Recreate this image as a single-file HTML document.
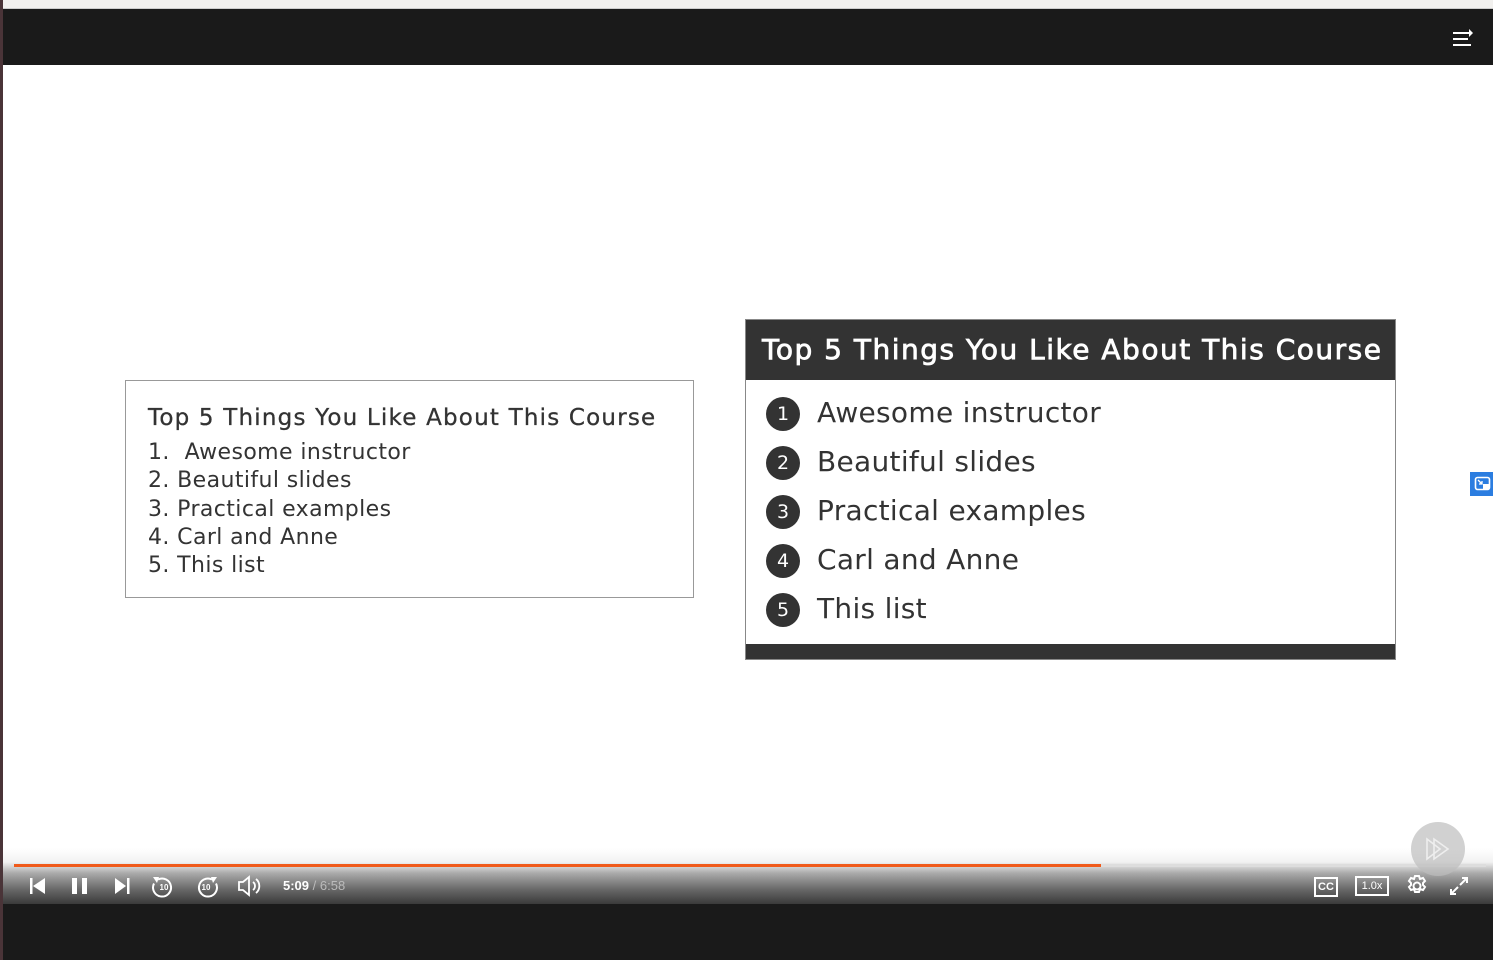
<!DOCTYPE html>
<html><head><style>
body{margin:0;width:1493px;height:960px;overflow:hidden;background:#fff;font-family:"Liberation Sans",sans-serif;position:relative}
.a{position:absolute}
.s{font-family:"DejaVu Sans",sans-serif}
.n{display:inline-block;width:34px;height:34px;border-radius:50%;background:#333;color:#fff;font-size:19px;line-height:34px;text-align:center;vertical-align:middle;margin-right:17px;letter-spacing:0}
</style></head><body>
<div class="a" style="left:0;top:0;width:1493px;height:8px;background:#f1f0ee;border-bottom:1px solid #ccc"></div>
<div class="a" style="left:3px;top:9px;width:1490px;height:56px;background:#1a1a1a"></div>
<div class="a" style="left:0;top:0;width:3px;height:960px;background:#4a3438"></div>
<svg class="a" style="left:1450px;top:28px" width="26" height="20"><g stroke="#fff" stroke-width="2"><line x1="3" y1="5" x2="20" y2="5"/><line x1="3" y1="11" x2="18" y2="11"/><line x1="3" y1="17" x2="21" y2="17"/></g><path d="M19 1l4 4-4 4z" fill="#fff"/></svg>

<div class="a s" style="left:125px;top:380px;width:567px;height:216px;border:1px solid #999;background:#fff;color:#333;font-size:22px;line-height:28.3px">
<div style="position:absolute;left:22px;top:23px;font-size:23px;letter-spacing:1.2px;white-space:nowrap;-webkit-text-stroke:0.3px #333">Top 5 Things You Like About This Course</div>
<div style="position:absolute;left:22px;top:58px;white-space:nowrap;letter-spacing:0.4px">1.&nbsp; Awesome instructor<br>2. Beautiful slides<br>3. Practical examples<br>4. Carl and Anne<br>5. This list</div>
</div>

<div class="a s" style="left:745px;top:319px;width:649px;height:339px;border:1px solid #888;background:#fff">
<div style="height:60px;background:#333;color:#fff;font-size:28px;letter-spacing:1.5px;line-height:60px;padding-left:16px;-webkit-text-stroke:0.8px #fff;white-space:nowrap">Top 5 Things You Like About This Course</div>
<div style="position:absolute;left:0;bottom:0;width:100%;height:15px;background:#333"></div>
<div style="position:absolute;left:20px;top:68px;color:#333;font-size:28px;line-height:49px;white-space:nowrap;letter-spacing:0.3px">
<div><span class="n">1</span>Awesome instructor</div>
<div><span class="n">2</span>Beautiful slides</div>
<div><span class="n">3</span>Practical examples</div>
<div><span class="n">4</span>Carl and Anne</div>
<div><span class="n">5</span>This list</div>
</div>
</div>

<div class="a" style="left:1470px;top:472px;width:23px;height:24px;background:#2b7de0"></div>
<svg class="a" style="left:1474px;top:476px" width="18" height="16"><rect x="1.5" y="1.5" width="14" height="12" rx="2" fill="none" stroke="#fff" stroke-width="1.6"/><path d="M4 4l4 4M8 5v3H5" stroke="#fff" stroke-width="1.3" fill="none"/><rect x="9" y="8" width="6" height="5" fill="#fff"/></svg>

<div class="a" style="left:3px;top:848px;width:1490px;height:56px;background:linear-gradient(#fff 0%,#f2f2f2 25%,#aaa 45%,#666 75%,#3a3a3a 100%)"></div>
<div class="a" style="left:3px;top:904px;width:1490px;height:56px;background:#1a1a1a"></div>
<div class="a" style="left:14px;top:864px;width:1472px;height:3px;background:#ddd"></div>
<div class="a" style="left:14px;top:864px;width:1087px;height:3px;background:#f05a1a"></div>
<div class="a" style="left:1411px;top:822px;width:54px;height:54px;border-radius:50%;background:rgba(190,190,190,0.7)"></div>
<svg class="a" style="left:1424px;top:835px" width="30" height="28" fill="none" stroke="#eee" stroke-width="1.6"><path d="M3 4v20l13-10z"/><path d="M10 4v20l14-10z"/></svg>

<svg class="a" style="left:25px;top:874px" width="360" height="26" fill="#fff">
<rect x="5" y="4" width="2.5" height="16"/><path d="M8 12l12-8v16z"/>
<rect x="47" y="4" width="5" height="16"/><rect x="57" y="4" width="5" height="16"/>
<path d="M90 4l11 8-11 8z"/><rect x="102" y="4" width="2.5" height="16"/>
<g fill="none" stroke="#fff" stroke-width="2"><path d="M133 5.5a9 9 0 1 1 -4 4"/><path d="M187 5.5a9 9 0 1 0 4 4"/></g>
<path d="M128 3l6 0-2 6z"/><path d="M192 3l-6 0 2 6z"/>
<text x="139" y="16" font-size="8" font-weight="bold" text-anchor="middle" font-family="Liberation Sans">10</text>
<text x="181" y="16" font-size="8" font-weight="bold" text-anchor="middle" font-family="Liberation Sans">10</text>
<path d="M214 8h4l6-5v18l-6-5h-4z" fill="none" stroke="#fff" stroke-width="1.8"/>
<path d="M228 8a5 5 0 0 1 0 8M231 5a9 9 0 0 1 0 14" fill="none" stroke="#fff" stroke-width="1.8"/>
</svg>
<div class="a" style="left:283px;top:878px;font-size:13px;color:#fff"><b>5:09</b> <span style="color:#bbb">/ 6:58</span></div>

<div class="a" style="left:1314px;top:877px;color:#fff;font-size:11px;font-weight:bold;line-height:16px;text-align:center;box-sizing:border-box;width:24px;height:20px;border:2px solid #fff">CC</div>
<div class="a" style="left:1355px;top:876px;width:34px;height:20px;border:2px solid #fff;box-sizing:border-box;color:#fff;font-size:11px;line-height:16px;text-align:center">1.0x</div>
<svg class="a" style="left:1405px;top:874px" width="24" height="24" fill="none" stroke="#fff" stroke-width="2"><circle cx="12" cy="12" r="3.5"/><path d="M10 2h4l1 3 3-1 2 3-2 2 0 2 2 2-2 3-3-1-1 3h-4l-1-3-3 1-2-3 2-2v-2l-2-2 2-3 3 1z"/></svg>
<svg class="a" style="left:1448px;top:875px" width="22" height="22" fill="none" stroke="#fff" stroke-width="2"><path d="M12 10l7-7M14 3h5v5M10 12l-7 7M3 14v5h5"/></svg>
</body></html>
